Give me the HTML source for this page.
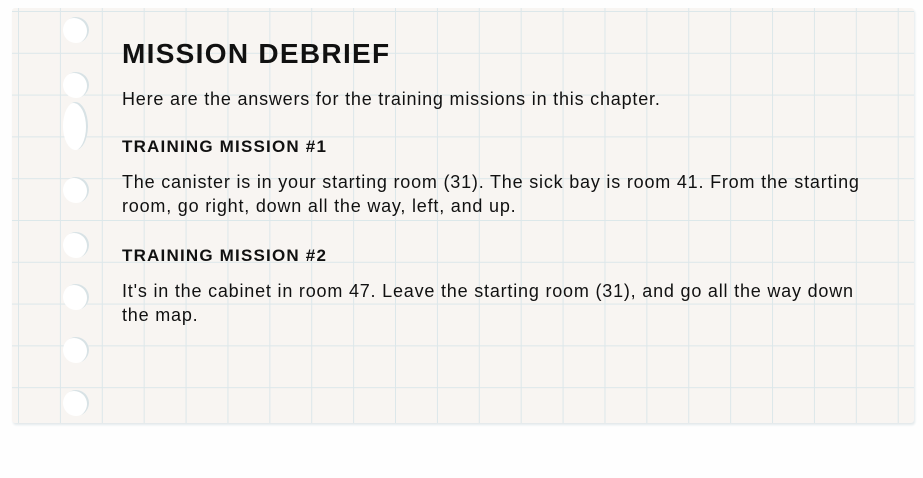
<!DOCTYPE html>
<html><head><style>
html,body{margin:0;padding:0;width:923px;height:478px;background:#fefefe;overflow:hidden}
.paper{position:absolute;left:12px;top:8px;width:902px;height:415px;background-color:#f8f5f2;
background-image:linear-gradient(to right,#dce7ea 1px,transparent 1px),linear-gradient(to bottom,#dce7ea 1px,transparent 1px);
background-size:41.9px 41.8px;background-position:6px 3px;border-radius:3px;box-shadow:1px 2px 2px #e3e9eb}
.hole{position:absolute;left:63px;width:26px;height:26px;border-radius:50%;background:#fff;box-shadow:-2px 1px 0 #d8e2e5 inset}
.t{position:absolute;left:122px;font-family:"Liberation Sans",sans-serif;color:#111;margin:0}
h1.t{font-size:28px;top:38px;letter-spacing:1.3px;font-weight:bold}
h2.t{font-size:17px;font-weight:bold;letter-spacing:1.2px}
p.t{font-size:18px;line-height:24px;width:760px;letter-spacing:0.8px}
</style></head><body>
<div class="paper"></div>
<div class="hole" style="top:17px"></div>
<div class="hole" style="top:72px"></div>
<div class="hole" style="top:102px;height:48px;width:25px;border-radius:50%"></div>
<div class="hole" style="top:177px"></div>
<div class="hole" style="top:232px"></div>
<div class="hole" style="top:284px"></div>
<div class="hole" style="top:337px"></div>
<div class="hole" style="top:390px"></div>
<h1 class="t">MISSION DEBRIEF</h1>
<p class="t" style="top:87px">Here are the answers for the training missions in this chapter.</p>
<h2 class="t" style="top:137px">TRAINING MISSION #1</h2>
<p class="t" style="top:170px">The canister is in your starting room (31). The sick bay is room 41. From the starting room, go right, down all the way, left, and up.</p>
<h2 class="t" style="top:246px">TRAINING MISSION #2</h2>
<p class="t" style="top:279px">It's in the cabinet in room 47. Leave the starting room (31), and go all the way down the map.</p>
</body></html>
